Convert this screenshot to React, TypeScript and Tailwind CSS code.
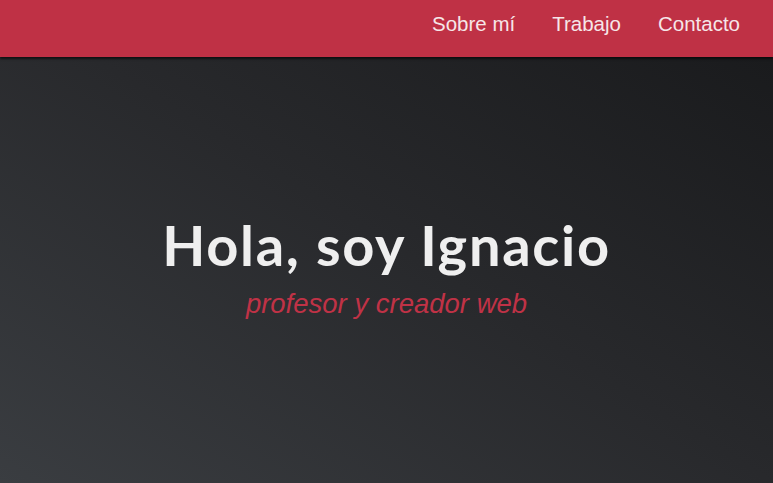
import React from "react";

const links = ["Sobre mí", "Trabajo", "Contacto"];

export default function App() {
  return (
    <div className="h-[483px] w-full overflow-hidden bg-gradient-to-tr from-[#3a3d41] via-[#28292c] to-[#18191b]">
      <header className="relative z-10 flex h-[57px] items-center justify-end bg-[#bf3145] pb-[9px] pr-[33px] shadow-[0_2px_2px_rgba(0,0,0,0.6)]">
        <nav className="flex gap-[37px] font-['Liberation_Sans',Arial,sans-serif] text-[20.5px] text-[#f6e6e8]">
          {links.map((l) => (
            <a key={l} href="#" className="leading-none">
              {l}
            </a>
          ))}
        </nav>
      </header>

      <main className="flex flex-col items-center pt-[160px]">
        <h1 className="font-['Lato',sans-serif] text-[56px] font-bold leading-none tracking-[1.7px] text-[#efefef]">
          Hola, soy Ignacio
        </h1>
        <p className="mt-[10px] font-['Liberation_Sans',Arial,sans-serif] text-[27.5px] italic text-[#c03246]">
          profesor y creador web
        </p>
      </main>
    </div>
  );
}
